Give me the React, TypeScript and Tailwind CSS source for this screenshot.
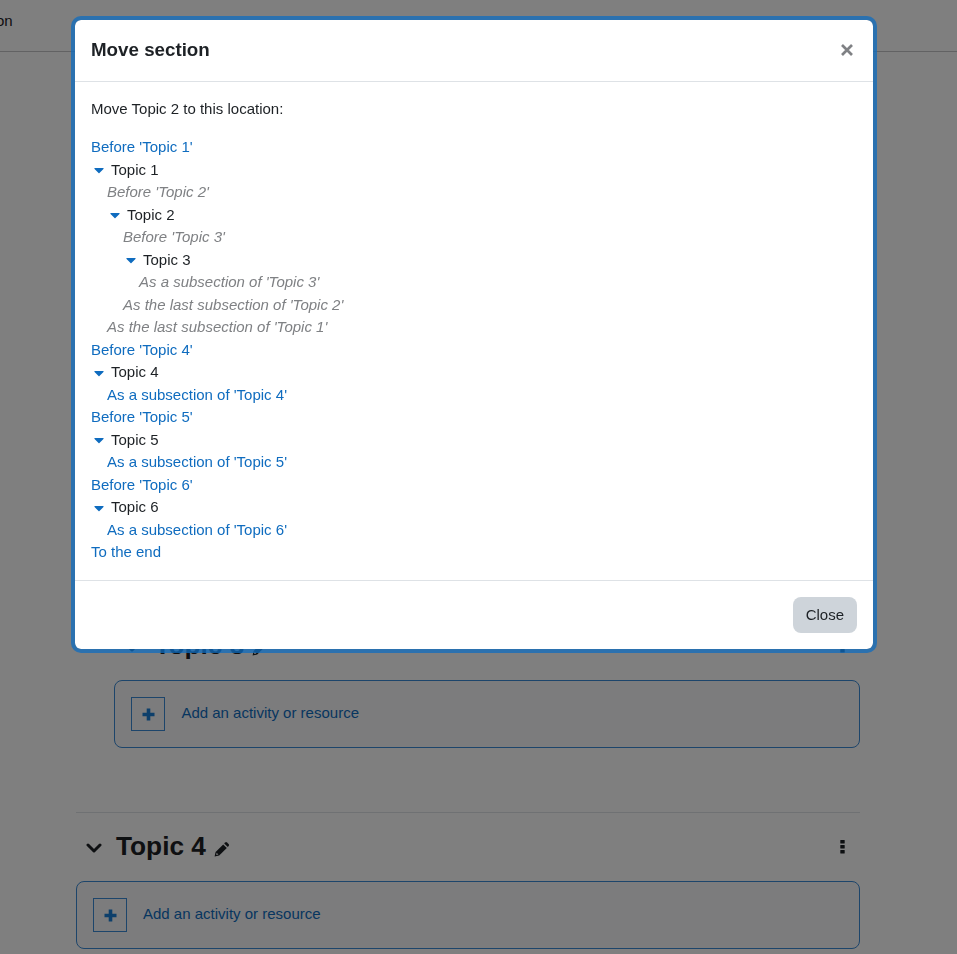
import { FaCaretDown } from 'react-icons/fa';

type Row = { label: string; level: number; kind: 'link' | 'topic' | 'off' };

const rows: Row[] = [
  { label: "Before 'Topic 1'", level: 0, kind: 'link' },
  { label: 'Topic 1', level: 0, kind: 'topic' },
  { label: "Before 'Topic 2'", level: 1, kind: 'off' },
  { label: 'Topic 2', level: 1, kind: 'topic' },
  { label: "Before 'Topic 3'", level: 2, kind: 'off' },
  { label: 'Topic 3', level: 2, kind: 'topic' },
  { label: "As a subsection of 'Topic 3'", level: 3, kind: 'off' },
  { label: "As the last subsection of 'Topic 2'", level: 2, kind: 'off' },
  { label: "As the last subsection of 'Topic 1'", level: 1, kind: 'off' },
  { label: "Before 'Topic 4'", level: 0, kind: 'link' },
  { label: 'Topic 4', level: 0, kind: 'topic' },
  { label: "As a subsection of 'Topic 4'", level: 1, kind: 'link' },
  { label: "Before 'Topic 5'", level: 0, kind: 'link' },
  { label: 'Topic 5', level: 0, kind: 'topic' },
  { label: "As a subsection of 'Topic 5'", level: 1, kind: 'link' },
  { label: "Before 'Topic 6'", level: 0, kind: 'link' },
  { label: 'Topic 6', level: 0, kind: 'topic' },
  { label: "As a subsection of 'Topic 6'", level: 1, kind: 'link' },
  { label: 'To the end', level: 0, kind: 'link' },
];

const indents = ['pl-0', 'pl-4', 'pl-8', 'pl-12'];

function MoveRow({ row }: { row: Row }) {
  if (row.kind === 'topic') {
    return (
      <div className={`flex h-[22.5px] items-center ${indents[row.level]}`}>
        <span className="flex w-5 justify-start pl-[3px] pt-[0.6px] text-[#0f6cbf]">
          <FaCaretDown className="h-4 w-[10px]" />
        </span>
        <span>{row.label}</span>
      </div>
    );
  }
  return (
    <div
      className={`h-[22.5px] ${indents[row.level]} ${row.kind === 'link' ? 'text-[#0f6cbf]' : 'italic text-[#7f8184]'}`}
    >
      {row.label}
    </div>
  );
}

function SectionHeading({ title }: { title: string }) {
  return (
    <div className="flex h-[34px] items-center">
      <span className="flex w-10 justify-start pl-[10px] pt-[4px]">
        <svg viewBox="0 0 16 10" className="h-[10px] w-4 text-[#1d2125]" fill="none" stroke="currentColor" strokeWidth="3" strokeLinecap="round" strokeLinejoin="round">
          <path d="M2 2 L8 8 L14 2" />
        </svg>
      </span>
      <h3 className="text-[26.25px] font-bold leading-[34px] text-[#1d2125]">{title}</h3>
      <svg viewBox="0 0 15 15" className="ml-2 mt-[7px] h-[15px] w-[15px] text-[#1d2125]" fill="currentColor">
        <path d="M9.2 2.4 L12.8 6 L5.2 13.6 L0.6 14.6 L1.6 10 Z" />
        <path d="M10.2 1.4 L11.2 0.4 Q12.2 -0.2 13 0.4 L14.8 2.2 Q15.2 3 14.8 3.8 L13.8 4.9 Z" />
        <path d="M2.6 10.8 L4.4 12.6 L2.2 13.1 Z" fill="#fff" />
      </svg>
      <svg viewBox="0 0 5 14" className="ml-auto mr-[15px] mt-px h-[14px] w-[5px] text-[#1d2125]" fill="currentColor">
        <rect x="0.3" y="0" width="4.4" height="3.6" rx="0.5" />
        <rect x="0.3" y="5" width="4.4" height="3.6" rx="0.5" />
        <rect x="0.3" y="10" width="4.4" height="3.6" rx="0.5" />
      </svg>
    </div>
  );
}

function AddBox() {
  return (
    <div className="flex h-[68px] items-center rounded-lg border border-[#3a8ad6] bg-[#f8f9fa] pl-4 text-[#0f6cbf]">
      <span className="flex h-[34px] w-[34px] items-center justify-center border border-[#3a8ad6]">
        <svg viewBox="0 0 13 13" className="h-[13px] w-[13px] text-[#1a7fd6]" fill="currentColor">
          <path d="M4.7 0.5 h3.6 v4.2 h4.2 v3.6 h-4.2 v4.2 h-3.6 v-4.2 h-4.2 v-3.6 h4.2 z" />
        </svg>
      </span>
      <span className="mb-[2px] ml-4">Add an activity or resource</span>
    </div>
  );
}

export default function App() {
  return (
    <div className="h-[954px] overflow-hidden bg-white font-['Liberation_Sans',Arial,sans-serif] text-[15px] leading-[22.5px] text-[#1d2125]">
      <header className="h-[52px] border-b border-[#c4c5c6] pt-[10px]">
        <span className="-ml-1 block">on</span>
      </header>

      <main className="ml-[76px] w-[784px] pt-[576px]">
        <section className="ml-[38.4px]">
          <SectionHeading title="Topic 3" />
          <div className="mt-[18px]">
            <AddBox />
          </div>
        </section>
        <section className="mt-16 border-t border-[#dee2e6] pt-4">
          <SectionHeading title="Topic 4" />
          <div className="mt-[18px]">
            <AddBox />
          </div>
        </section>
      </main>

      <div className="fixed inset-0 flex items-start bg-black/50 pl-[71px] pt-4">
        <div className="flex h-[637px] w-[806px] flex-col rounded-[10px] border-4 border-[#0f6cbf]/75 bg-white bg-clip-padding">
          <div className="flex h-[62px] shrink-0 items-center justify-between border-b border-[#dee2e6] pl-4 pr-5">
            <h5 className="text-[18.75px] font-bold">Move section</h5>
            <svg viewBox="0 0 12 12" className="mb-px h-3 w-3 text-[#7f8184]" fill="none" stroke="currentColor" strokeWidth="2.7">
              <path d="M1 1 L11 11 M11 1 L1 11" />
            </svg>
          </div>
          <div className="flex-1 px-4 pt-4">
            <p className="mb-[15.5px]">Move Topic 2 to this location:</p>
            {rows.map((row) => (
              <MoveRow key={`${row.label}-${row.level}`} row={row} />
            ))}
          </div>
          <div className="flex h-[69px] shrink-0 items-center justify-end border-t border-[#dee2e6] px-4">
            <button className="h-9 rounded-lg bg-[#ced4da] px-[13px]">Close</button>
          </div>
        </div>
      </div>
    </div>
  );
}
